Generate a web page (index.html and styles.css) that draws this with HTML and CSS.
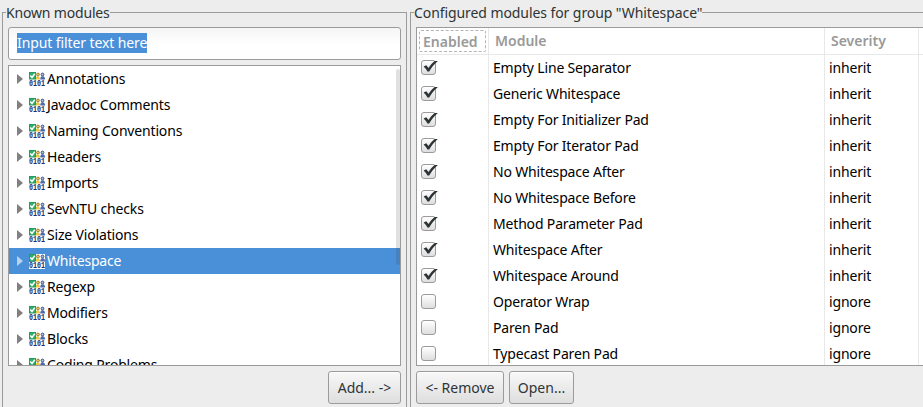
FILE: index.html
```html
<!DOCTYPE html>
<html lang="en">
<head>
<meta charset="utf-8">
<title>Modules</title>
<link rel="stylesheet" href="styles.css">
</head>
<body>
<main class="window">
  <section class="group known">
    <h2 class="legend">Known modules</h2>
    <div class="filter"><span class="selection">Input filter text here</span></div>
    <ul class="tree" id="tree"></ul>
    <div class="actions end"><button class="add">Add... -&gt;</button></div>
  </section>
  <section class="group configured">
    <h2 class="legend">Configured modules for group "Whitespace"</h2>
    <div class="table" id="table">
      <div class="row head"><div class="cell"><span class="focus">Enabled</span></div><div class="cell">Module</div><div class="cell">Severity</div><div></div></div>
    </div>
    <div class="actions"><button class="remove">&lt;- Remove</button><button class="open">Open...</button></div>
  </section>
</main>
<script src="script.js"></script>
</body>
</html>
```
FILE: styles.css
```css
* { box-sizing: border-box; }
body { margin: 0; background: #ededed; color: #000; font: 14px/26px "Noto Sans", "Open Sans", sans-serif; letter-spacing: -.17px; overflow: hidden; }
.window { display: flex; gap: 3px; width: 923px; height: 407px; padding-left: 2px; overflow: hidden; white-space: nowrap; }
.group { border: 1px solid #9b9b9b; border-bottom: 0; margin-top: 12px; padding: 0 5px; height: 395px; }
.known { width: 405px; flex: none; }
.configured { flex: 1; min-width: 0; border-right: 0; padding-right: 0; }
.legend { width: max-content; margin: -11px 0 4px -2px; padding: 0; height: 21px; line-height: 21px; font-size: 14px; font-weight: 400; color: #2e3436; background: #ededed; }
.configured .legend { letter-spacing: -.08px; }
.filter { height: 33px; border: 1px solid #9b9b9b; border-radius: 3px; background: linear-gradient(#f5f5f5, #fff 55%); padding: 5px 8px; display: flex; }
.selection { height: 20px; line-height: 20px; color: #fff; background: #4a90d9; letter-spacing: -.1px; }
.tree { position: relative; list-style: none; margin: 5px 0 0; padding: 0; height: 301px; border: 1px solid #9b9b9b; background: #fff; overflow: hidden; }
.tree::after { content: ""; position: absolute; right: 0; top: 3px; width: 4px; height: 196px; border-radius: 2px; background: #2e343626; }
.node { height: 26px; display: flex; align-items: center; padding-left: 8px; }
.arrow { width: 6px; height: 10px; background: #808080; clip-path: polygon(0 0, 100% 50%, 0 100%); }
.module { width: 16px; height: 15px; margin: 0 2px 0 6px; }
.node.on { background: #4a90d9; color: #fff; }
.on .arrow { background: #b7d2ef; }
.plate { fill: none; }
.on .plate { fill: #fff; }
.bits { font: bold 8.5px "Liberation Mono", monospace; fill: #1c2d70; letter-spacing: 0; }
.table { height: 339px; border: 1px solid #9b9b9b; border-right: 0; background: #fff; overflow: hidden; }
.row { display: grid; grid-template-columns: 72px 336px 94px 1fr; height: 26px; }
.cell { border-right: 1px solid #e8e8e8; padding-left: 4px; }
.head { height: 27px; border-bottom: 1px solid #e8e8e8; color: #999; font-weight: 600; letter-spacing: 0; }
.head .cell { padding-left: 6px; }
.head .cell:first-child { padding: 2px; }
.focus { display: block; width: 67px; height: 22px; line-height: 22px; padding-left: 3px; border: 1px dashed #b4b4b4; border-radius: 2px; }
.box { position: relative; width: 15px; height: 15px; margin-top: 5px; border: 1px solid #9b9b9b; border-radius: 3px; background: linear-gradient(#fff, #dedede); }
.box svg { position: absolute; left: -1px; top: -1px; width: 17px; height: 15px; }
.actions { display: flex; gap: 5px; margin-top: 5px; }
.end { justify-content: flex-end; }
button { height: 33px; border: 1px solid #9b9b9b; border-radius: 3px; background: linear-gradient(#f8f8f8, #dedede); box-shadow: inset 0 1px #fff; color: #2e3436; font: 14px "Noto Sans", "Open Sans", sans-serif; padding: 0 0 1px; letter-spacing: 0; }
.add { width: 73px; }
.remove { width: 88px; }
.open { width: 65px; }
```
FILE: script.js
```js
const groups = ["Annotations", "Javadoc Comments", "Naming Conventions", "Headers", "Imports", "SevNTU checks", "Size Violations", "Whitespace", "Regexp", "Modifiers", "Blocks", "Coding Problems"];
const modules = ["Empty Line Separator", "Generic Whitespace", "Empty For Initializer Pad", "Empty For Iterator Pad", "No Whitespace After", "No Whitespace Before", "Method Parameter Pad", "Whitespace After", "Whitespace Around", "Operator Wrap", "Paren Pad", "Typecast Paren Pad"];

const moduleIcon = `<svg class="module" viewBox="0 0 16 15">
  <rect class="plate" y="8" width="16" height="7"/>
  <rect class="plate" x="6" width="10" height="8"/>
  <rect x=".5" y=".5" width="6" height="6.500" fill="#2fae6c" stroke="#249a5c"/>
  <path d="M1.300 3.500 3 5.500 5.800 1.800" fill="none" stroke="#fff" stroke-width="1.500"/>
  <path d="M7 7.500V5.300L8.500 4 10 5l1 1v1.500z" fill="#edc73d"/>
  <circle cx="9" cy="2.500" r="1.400" fill="#f0cf52" stroke="#8d6c16" stroke-width=".8"/>
  <path d="M11.300 7.500V6l1.200-1.800h2L16 6v1.500z" fill="#5169ae"/>
  <circle cx="13.500" cy="2.500" r="1.400" fill="#b3c0df" stroke="#2c4483" stroke-width=".9"/>
  <text x="0" y="14" textLength="16" lengthAdjust="spacingAndGlyphs" class="bits">0101</text>
</svg>`;
const checkIcon = `<svg viewBox="0 0 17 15"><path d="M2.600 6.500 5.300 5.300 7.500 8C9.500 4.800 11.800 2.200 13.800 .9H16.900C13 4.300 10.500 7.500 8.200 11.500H6.400C5.300 9.500 4.200 8 2.600 6.500z" fill="#2e3436"/></svg>`;

document.getElementById("tree").innerHTML = groups.map(name =>
  `<li class="node${name === "Whitespace" ? " on" : ""}"><i class="arrow"></i>${moduleIcon}<span>${name}</span></li>`).join("");
document.getElementById("table").insertAdjacentHTML("beforeend", modules.map((name, i) =>
  `<div class="row"><div class="cell"><div class="box">${i < 9 ? checkIcon : ""}</div></div><div class="cell"><span>${name}</span></div><div class="cell"><span>${i < 9 ? "inherit" : "ignore"}</span></div><div></div></div>`).join(""));
```
